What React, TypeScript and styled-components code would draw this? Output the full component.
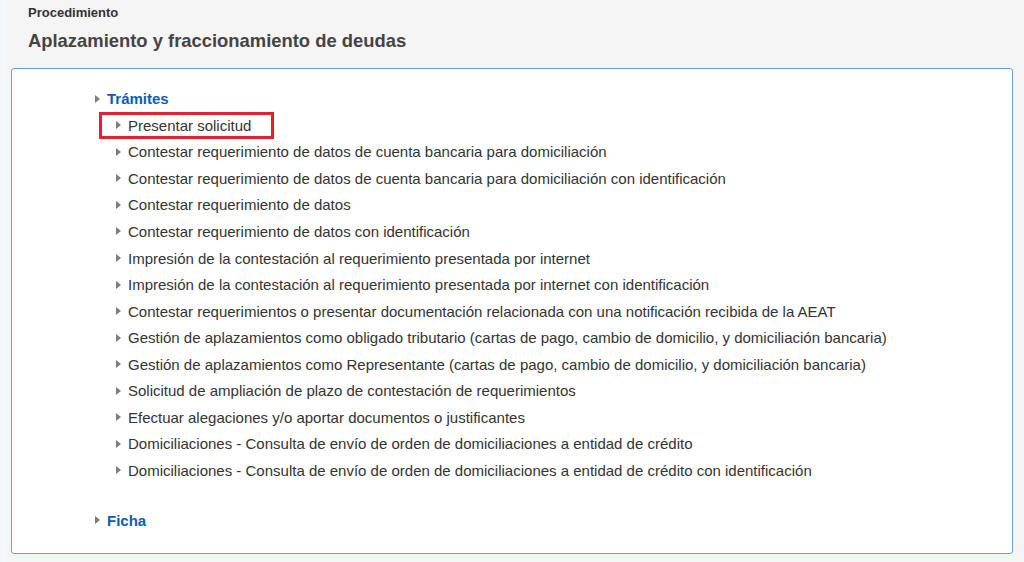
import React from "react";
import styled, { createGlobalStyle } from "styled-components";

const Global = createGlobalStyle`
  html, body { margin: 0; padding: 0; background: #f5f5f5; }
  body { font-family: "Liberation Sans", Arial, sans-serif; color: #333; }
`;

const Page = styled.div`
  min-height: 562px;
  border-left: 6px solid #f4f7fb;
  box-sizing: border-box;
  padding: 0 11px 0 5px;
`;

const Header = styled.header`
  padding: 5px 0 0 17px;
  display: flex;
  flex-direction: column;
`;

const Kicker = styled.div`
  font-size: 13px;
  line-height: 16px;
  font-weight: 700;
  color: #333;
`;

const Title = styled.h1`
  margin: 9px 0 0;
  font-size: 18.4px;
  line-height: 22px;
  font-weight: 700;
  color: #444;
`;

const Panel = styled.section`
  margin-top: 16px;
  height: 486px;
  box-sizing: border-box;
  background: #fff;
  border: 1.5px solid #6a9fdc;
  border-radius: 3px;
  padding: 16px 0 0 83px;
`;

const Tree = styled.ul`
  list-style: none;
  margin: 0;
  padding: 0;
`;

const Arrow = styled.span`
  display: inline-block;
  width: 0;
  height: 0;
  border-top: 4px solid transparent;
  border-bottom: 4px solid transparent;
  border-left: 5px solid #7d7d7d;
  margin-right: 7px;
  flex: none;
`;

const Section = styled.li<{ $gap?: number }>`
  margin-top: ${(p) => p.$gap ?? 0}px;
`;

const SectionLabel = styled.div`
  display: flex;
  align-items: center;
  height: 27px;
  font-size: 15px;
  font-weight: 700;
  color: #0b5cb3;
`;

const Items = styled.ul`
  list-style: none;
  margin: 0;
  padding: 0 0 0 21px;
`;

const Item = styled.li`
  position: relative;
  display: flex;
  align-items: center;
  height: 26.55px;
  font-size: 15px;
  color: #333;
`;

const Mark = styled.span`
  position: absolute;
  left: -17px;
  top: -0.5px;
  width: 175px;
  height: 27px;
  box-sizing: border-box;
  border: 3px solid #e5202b;
  pointer-events: none;
`;

const tramites = [
  "Presentar solicitud",
  "Contestar requerimiento de datos de cuenta bancaria para domiciliación",
  "Contestar requerimiento de datos de cuenta bancaria para domiciliación con identificación",
  "Contestar requerimiento de datos",
  "Contestar requerimiento de datos con identificación",
  "Impresión de la contestación al requerimiento presentada por internet",
  "Impresión de la contestación al requerimiento presentada por internet con identificación",
  "Contestar requerimientos o presentar documentación relacionada con una notificación recibida de la AEAT",
  "Gestión de aplazamientos como obligado tributario (cartas de pago, cambio de domicilio, y domiciliación bancaria)",
  "Gestión de aplazamientos como Representante (cartas de pago, cambio de domicilio, y domiciliación bancaria)",
  "Solicitud de ampliación de plazo de contestación de requerimientos",
  "Efectuar alegaciones y/o aportar documentos o justificantes",
  "Domiciliaciones - Consulta de envío de orden de domiciliaciones a entidad de crédito",
  "Domiciliaciones - Consulta de envío de orden de domiciliaciones a entidad de crédito con identificación",
];

export default function App() {
  return (
    <>
      <Global />
      <Page>
        <Header>
          <Kicker>Procedimiento</Kicker>
          <Title>Aplazamiento y fraccionamiento de deudas</Title>
        </Header>
        <Panel>
          <Tree>
            <Section>
              <SectionLabel>
                <Arrow />
                Trámites
              </SectionLabel>
              <Items>
                {tramites.map((t, i) => (
                  <Item key={i}>
                    {i === 0 && <Mark />}
                    <Arrow />
                    {t}
                  </Item>
                ))}
              </Items>
            </Section>
            <Section $gap={23}>
              <SectionLabel>
                <Arrow />
                Ficha
              </SectionLabel>
            </Section>
          </Tree>
        </Panel>
      </Page>
    </>
  );
}
